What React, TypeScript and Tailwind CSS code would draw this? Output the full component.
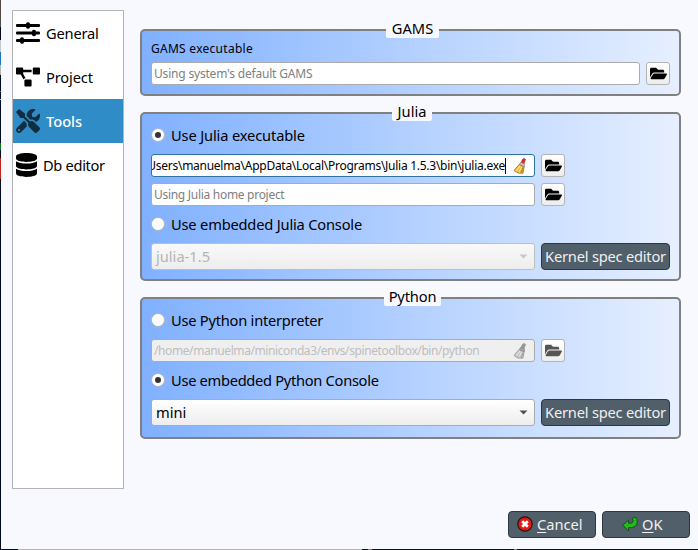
import type { ReactNode } from "react";
import { FaDatabase, FaFolderOpen, FaProjectDiagram, FaTools } from "react-icons/fa";

function Sliders() {
  return (
    <svg width="24" height="22" viewBox="0 0 24 22" fill="black">
      <rect x="0" y="2" width="24" height="3" rx="1" />
      <rect x="0" y="9.5" width="24" height="3" rx="1" />
      <rect x="0" y="17" width="24" height="3" rx="1" />
      <rect x="10" y="0.3" width="4" height="6.4" rx="1.8" />
      <rect x="16" y="7.8" width="4" height="6.4" rx="1.8" />
      <rect x="4" y="15.3" width="4" height="6.4" rx="1.8" />
    </svg>
  );
}

function Broom({ disabled = false }: { disabled?: boolean }) {
  const handle = disabled ? "#999" : "#dc2b20";
  const band = disabled ? "#aaa" : "#c9c4be";
  const bristle = disabled ? "#c4c4c4" : "#f3b73c";
  const light = disabled ? "#dedede" : "#ffe17a";
  const line = disabled ? "#888" : "#8a5412";
  return (
    <svg width="14" height="16" viewBox="0 0 14 16" className="shrink-0">
      <path d="M7.6 5.3 9.6 1.2q2-1.5 2.9.3l-1.8 5z" fill={handle} stroke={disabled ? "#888" : "#a12b20"} strokeWidth=".6" />
      <path d="M6.3 6.3 1 12.4l1.2 1.1 1 .2 1.2 1.2 5.5.3 1.3-6.7z" fill={bristle} stroke={line} strokeWidth=".7" />
      <path d="m7 8-4 4.8M8.5 9 6 14.3" stroke={light} strokeWidth="1.2" />
      <path d="m6.4 6.3 1.6-2 3.6 2-.4 2.5z" fill={band} stroke="#777" strokeWidth=".6" />
      <path d="m9.8 9.6-1.5 5" stroke={line} strokeWidth=".6" />
    </svg>
  );
}

function NavItem({ icon, label, active = false }: { icon: ReactNode; label: ReactNode; active?: boolean }) {
  return (
    <div className={`flex h-11 items-center pl-[3px] ${active ? "bg-[#308cc6] text-white" : "text-black"}`}>
      {icon}
      {label}
    </div>
  );
}

function Group({ title, className, children }: { title: ReactNode; className: string; children: ReactNode }) {
  return (
    <section className={`relative rounded-[5px] border-2 border-[#808080] bg-linear-to-r from-[#80b0ff] to-[#e6efff] px-[9px] ${className}`}>
      {title}
      {children}
    </section>
  );
}

const titleClass = "absolute -top-[13px] h-5 rounded-b-[2px] bg-[#f8f9ff] text-center leading-5";

function FolderButton({ disabled = false }: { disabled?: boolean }) {
  return (
    <div className="flex h-[23px] w-6 shrink-0 items-center justify-center rounded-[3px] border border-[#b4b4b4] bg-linear-to-b from-white to-[#ededed]">
      <FaFolderOpen size={17} className="-mt-px" color={disabled ? "#555" : "#000"} />
    </div>
  );
}

function Radio({ checked = false, children }: { checked?: boolean; children: ReactNode }) {
  return (
    <div className="flex h-[22px] items-center gap-[6px]">
      <span className="flex size-[14px] items-center justify-center rounded-full border border-[#b0b5bd] bg-white">
        {checked && <span className="size-[6px] rounded-full bg-[#333]" />}
      </span>
      {children}
    </div>
  );
}

function Combo({ text, disabled = false }: { text: string; disabled?: boolean }) {
  return (
    <div className="flex gap-[6px]">
      <div className={`flex h-[27px] w-[384px] items-center justify-between rounded-[3px] border bg-linear-to-b pr-[6px] pl-1 ${disabled ? "border-[#bfbfbf] from-[#f9f9f9] to-[#ededed] text-[#b5b5b5]" : "border-[#ababab] from-white to-[#ededed]"}`}>
        <span className="pb-[2px]">{text}</span>
        <svg width="9" height="5" viewBox="0 0 9 5" fill={disabled ? "#c8c8c8" : "#505050"}>
          <path d="M.5.5h8l-4 4z" />
        </svg>
      </div>
      <div className="flex h-[27px] w-[129px] items-center justify-center rounded-[4px] border border-[#2c3740] bg-[#505f69] text-[#f0f0f0]">
        <span className="pb-[2px] tracking-[-0.22px]">Kernel spec editor</span>
      </div>
    </div>
  );
}

const fieldClass = "flex h-[23px] items-center overflow-hidden rounded-[3px] border text-[12px] whitespace-nowrap";

export default function App() {
  return (
    <div className="flex h-[550px] w-[698px] flex-col overflow-hidden bg-[#f8f9ff] font-['Noto_Sans',sans-serif] text-[14.67px] leading-5 text-black">
      <div className="flex h-[549px]">
        <div className="flex h-full w-px flex-col bg-[#000a20]">
          <div className="h-[27px] bg-[#504b48]" />
          <div className="mt-[13px] h-3 bg-[#c4c8cc]" />
          <div className="h-[13px] bg-[#1c78b8]" />
          <div className="h-[10px] bg-[#b4b4b4]" />
          <div className="mt-4 h-px bg-[#2882c0]" />
          <div className="mt-[7px] h-px bg-[#a0c8e0]" />
          <div className="mt-[43px] h-[7px] bg-[#127418]" />
          <div className="mt-2 h-[21px] bg-[#b82420]" />
        </div>
        <div className="flex flex-1 flex-col pt-[10px] pl-[11px]">
          <div className="flex h-[479px]">
            <nav className="h-[479px] w-28 border border-[#b4b4b4] bg-white">
              <NavItem icon={<Sliders />} label={<span className="ml-[6px] tracking-[-0.2px]">General</span>} />
              <NavItem icon={<FaProjectDiagram size={24} />} label={<span className="ml-[6px] tracking-[-0.15px]">Project</span>} />
              <NavItem active icon={<FaTools size={24} color="#102d42" />} label={<span className="ml-[6px] font-medium">Tools</span>} />
              <NavItem icon={<FaDatabase size={24} className="w-[21px]" />} label={<span className="ml-[6px] tracking-[-0.33px]">Db editor</span>} />
            </nav>
            <main className="ml-4 flex w-[541px] flex-col pt-[19px]">
              <Group title={<h2 className={`${titleClass} left-[244px] w-[53px]`}>GAMS</h2>} className="h-[67px] pt-[7px]">
                <div className="h-5 pt-px text-[12px] tracking-[0.27px]">GAMS executable</div>
                <div className="mt-[4px] flex gap-[6px]">
                  <div className={`${fieldClass} w-[489px] border-[#ababab] bg-white pl-[2px] tracking-[-0.19px] text-[#808080]`}>Using system's default GAMS</div>
                  <FolderButton />
                </div>
              </Group>
              <Group title={<h2 className={`${titleClass} left-[250px] w-10`}>Julia</h2>} className="mt-4 h-[169px] pt-[10px]">
                <Radio checked><span className="tracking-[-0.15px]">Use Julia executable</span></Radio>
                <div className="mt-[8px] flex gap-[6px]">
                  <div className={`${fieldClass} w-[384px] justify-between border-[#30729f] bg-white pr-[7px]`}>
                    <div className="flex h-full w-[354px] items-center justify-end overflow-hidden">
                      <span className="tracking-[-0.27px]">Users\manuelma\AppData\Local\Programs\Julia 1.5.3\bin\julia.exe</span>
                      <span className="h-4 w-px shrink-0 bg-black" />
                    </div>
                    <Broom />
                  </div>
                  <FolderButton />
                </div>
                <div className="mt-[6px] flex gap-[6px]">
                  <div className={`${fieldClass} w-[384px] border-[#ababab] bg-white pl-[2px] tracking-[-0.29px] text-[#808080]`}>Using Julia home project</div>
                  <FolderButton />
                </div>
                <div className="mt-[7px] mb-2"><Radio><span className="tracking-[-0.19px]">Use embedded Julia Console</span></Radio></div>
                <Combo disabled text="julia-1.5" />
              </Group>
              <Group title={<h2 className={`${titleClass} left-[242px] w-[57px] tracking-[-0.15px]`}>Python</h2>} className="mt-4 h-[142px] pt-[10px]">
                <Radio><span className="tracking-[-0.24px]">Use Python interpreter</span></Radio>
                <div className="mt-2 flex gap-[6px]">
                  <div className={`${fieldClass} w-[384px] justify-between border-[#ababab] bg-[#efefef] pr-[7px] pl-[2px] text-[#bebebe]`}>
                    <span className="tracking-[-0.41px]">/home/manuelma/miniconda3/envs/spinetoolbox/bin/python</span>
                    <Broom disabled />
                  </div>
                  <FolderButton disabled />
                </div>
                <div className="mt-[7px] mb-2"><Radio checked><span className="tracking-[-0.3px]">Use embedded Python Console</span></Radio></div>
                <Combo text="mini" />
              </Group>
            </main>
          </div>
          <footer className="mt-[22px] flex justify-end gap-[6px] pr-2 text-[#f0f0f0]">
            <button className="flex h-[27px] w-[88px] items-center rounded-[4px] border border-[#2c3740] bg-[#505f69] pb-px pl-2">
              <svg width="16" height="16" viewBox="0 0 16 16">
                <circle cx="8" cy="8" r="7.2" fill="#e01b12" stroke="#251010" strokeWidth="1.2" />
                <path d="m5.2 5.2 5.6 5.6m0-5.6-5.6 5.6" stroke="white" strokeWidth="2.7" />
              </svg>
              <span className="ml-1"><span className="underline underline-offset-2">C</span>ancel</span>
            </button>
            <button className="flex h-[27px] w-[88px] items-center rounded-[4px] border border-[#2c3740] bg-[#505f69] pb-px pl-[19px]">
              <svg width="16" height="16" viewBox="0 0 16 16">
                <path d="M.7 9.2 6.6 4v3.2h2.2q2.3-.2 2.4-2.9L9.8 2.6 13 1q2.8 2 2.3 5.4-.8 4.6-5.6 5.1H6.6v3.6z" fill="#22bb18" stroke="#145018" strokeWidth="1" />
              </svg>
              <span className="ml-1"><span className="underline underline-offset-2">O</span>K</span>
            </button>
          </footer>
        </div>
      </div>
      <div className="flex h-px">
        <div className="w-[18px] bg-[#000a20]" />
        <div className="w-[344px] bg-[#b4b4b4]" />
        <div className="w-[6px] bg-[#10141c]" />
        <div className="w-1 bg-[#808080]" />
        <div className="w-[142px] bg-[#10141c]" />
        <div className="w-[3px] bg-[#808080]" />
        <div className="flex-1 bg-[#10141c]" />
      </div>
    </div>
  );
}
